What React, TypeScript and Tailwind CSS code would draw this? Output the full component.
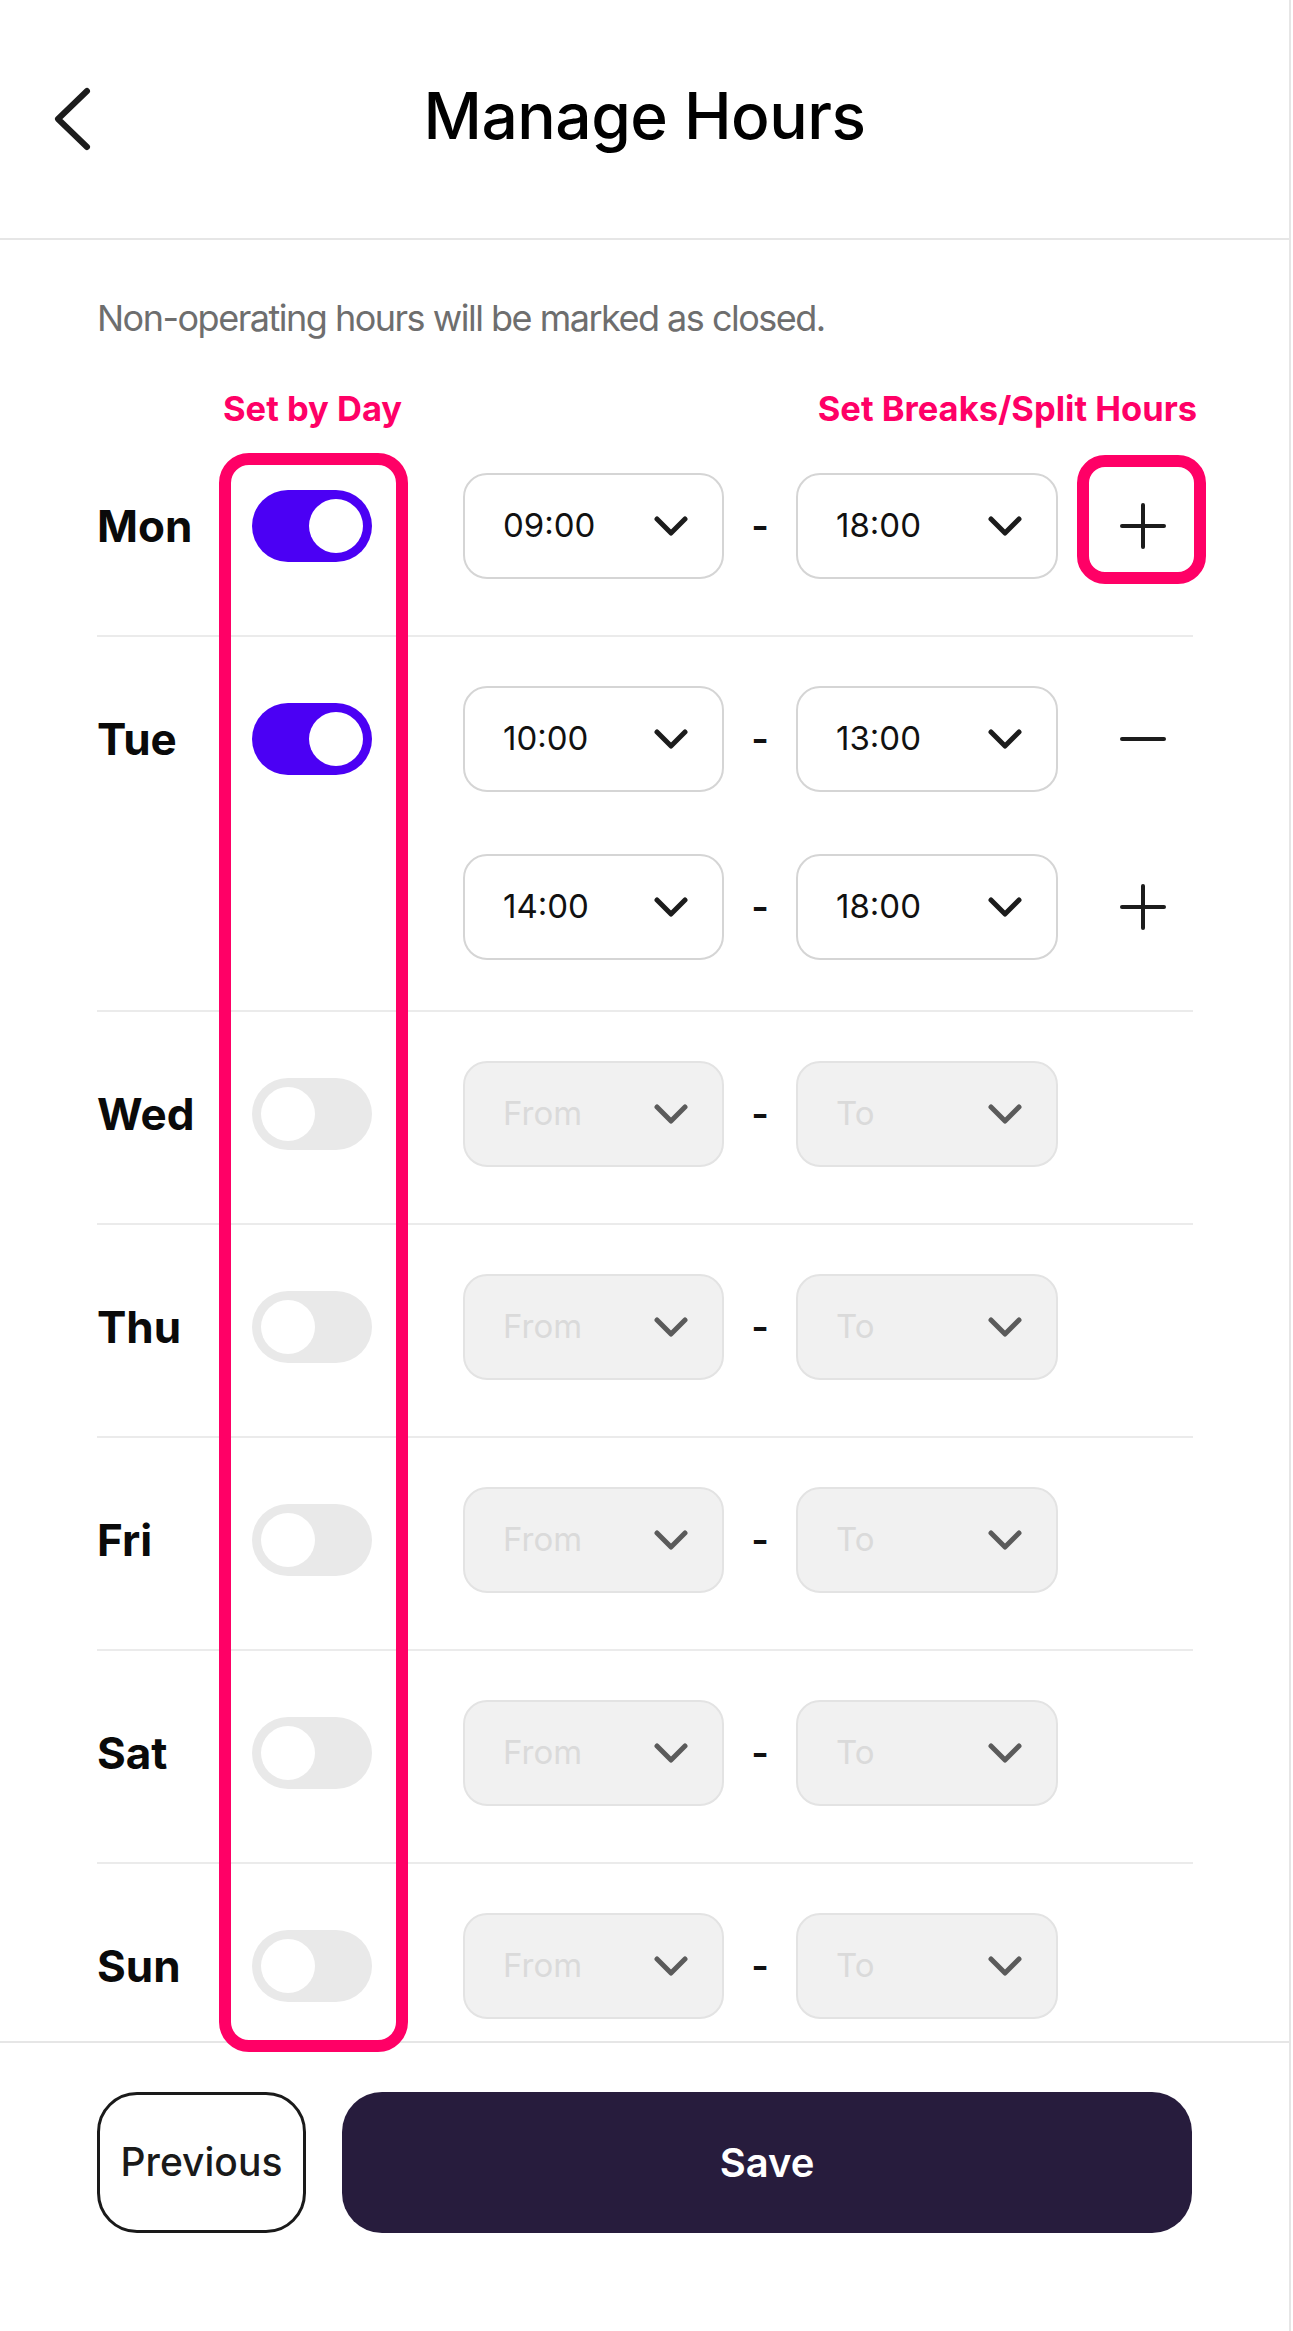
import React from 'react';

type Slot = { from: string; to: string; action: 'plus' | 'minus' };
type Day = { name: string; open: boolean; slots: Slot[] };

const days: Day[] = [
  { name: 'Mon', open: true, slots: [{ from: '09:00', to: '18:00', action: 'plus' }] },
  {
    name: 'Tue',
    open: true,
    slots: [
      { from: '10:00', to: '13:00', action: 'minus' },
      { from: '14:00', to: '18:00', action: 'plus' },
    ],
  },
  { name: 'Wed', open: false, slots: [] },
  { name: 'Thu', open: false, slots: [] },
  { name: 'Fri', open: false, slots: [] },
  { name: 'Sat', open: false, slots: [] },
  { name: 'Sun', open: false, slots: [] },
];

function Chevron({ muted }: { muted?: boolean }) {
  return (
    <svg width="34" height="20" viewBox="0 0 34 20" fill="none">
      <polyline
        points="3,3 17,17 31,3"
        stroke={muted ? '#5b5b5b' : '#1c1c1c'}
        strokeWidth="5"
        strokeLinecap="round"
        strokeLinejoin="round"
      />
    </svg>
  );
}

function Toggle({ on }: { on: boolean }) {
  return (
    <div
      className={`w-[120px] h-[72px] rounded-full p-[9px] flex ${
        on ? 'bg-[#4b00f4] justify-end' : 'bg-[#e9e9e9] justify-start'
      }`}
    >
      <div className="w-[54px] h-[54px] rounded-full bg-white" />
    </div>
  );
}

function TimeBox({ value, placeholder, wide }: { value?: string; placeholder: string; wide?: boolean }) {
  const enabled = !!value;
  return (
    <div
      className={`${wide ? 'w-[262px]' : 'w-[261px]'} h-[106px] rounded-[24px] border-2 flex items-center justify-between pl-[38px] pr-[34px] ${
        enabled ? 'border-[#d5d5d5] bg-white' : 'border-[#e3e3e3] bg-[#f1f1f1]'
      }`}
    >
      <span className={`text-[33px] ${enabled ? 'text-[#111111]' : 'text-[#dadada]'}`}>
        {value ?? placeholder}
      </span>
      <Chevron muted={!enabled} />
    </div>
  );
}

function ActionIcon({ kind }: { kind: 'plus' | 'minus' }) {
  return (
    <svg width="46" height="46" viewBox="0 0 46 46" fill="none">
      <line x1="2" y1="23" x2="44" y2="23" stroke="#1c1c1c" strokeWidth="4" strokeLinecap="round" />
      {kind === 'plus' && (
        <line x1="23" y1="2" x2="23" y2="44" stroke="#1c1c1c" strokeWidth="4" strokeLinecap="round" />
      )}
    </svg>
  );
}

function SlotRow({ from, to, action }: { from?: string; to?: string; action?: 'plus' | 'minus' }) {
  return (
    <div className="flex items-center h-[106px]">
      <TimeBox value={from} placeholder="From" />
      <div className="w-[72px] text-center text-[38px] font-semibold text-[#111111] leading-none">-</div>
      <TimeBox value={to} placeholder="To" wide />
      {action && (
        <div className="ml-[62px] flex items-center">
          <ActionIcon kind={action} />
        </div>
      )}
    </div>
  );
}

export default function App() {
  return (
    <div className="relative w-[1291px] h-[2331px] bg-white border-r-2 border-[#e6e6e6] font-['Inter',sans-serif] text-black overflow-hidden">
      {/* Header */}
      <header className="h-[240px] border-b-2 border-[#e6e6e6] flex items-center relative">
        <div className="absolute left-[52px] top-[86px]">
          <svg width="40" height="66" viewBox="0 0 40 66" fill="none">
            <polyline
              points="35,5 6,33 35,61"
              stroke="#1c1c1c"
              strokeWidth="6"
              strokeLinecap="round"
              strokeLinejoin="round"
            />
          </svg>
        </div>
        <h1 className="w-full text-center text-[64px] font-medium tracking-[-0.5px] -mt-[6px]">Manage Hours</h1>
      </header>

      {/* Scroll area */}
      <main className="h-[1801px] overflow-hidden">
        <p className="pt-[57px] pl-[97px] text-[36px] leading-[42px] tracking-[-1.5px] text-[#6e6e6e]">
          Non-operating hours will be marked as closed.
        </p>

        <div className="mt-[50px] h-[40px] flex items-center text-[34.5px] font-bold text-[#ff0066] leading-[40px]">
          <span className="ml-[223px]">Set by Day</span>
          <span className="ml-auto mr-[92px]">Set Breaks/Split Hours</span>
        </div>

        <div className="ml-[97px] w-[1096px] mt-[44px]">
          {days.map((d, i) => (
            <div
              key={d.name}
              className={`flex border-b-2 border-[#ebebeb] ${i === 0 ? 'pt-0' : 'pt-[49px]'} ${
                d.name === 'Tue' ? 'pb-[50px]' : 'pb-[56px]'
              }`}
            >
              <div className="w-[155px] h-[106px] flex items-center text-[44px] font-bold text-[#0a0a0a]">
                {d.name}
              </div>
              <div className="w-[120px] h-[106px] flex items-center">
                <Toggle on={d.open} />
              </div>
              <div className="ml-[91px] flex flex-col gap-[62px]">
                {d.open ? (
                  d.slots.map((s, j) => <SlotRow key={j} from={s.from} to={s.to} action={s.action} />)
                ) : (
                  <SlotRow />
                )}
              </div>
            </div>
          ))}
        </div>
      </main>

      {/* Footer */}
      <footer className="border-t-2 border-[#e6e6e6] pt-[49px] px-[97px] flex gap-[36px]">
        <button className="w-[209px] h-[141px] rounded-[40px] border-[3px] border-[#1a1a1a] text-[39px] font-medium text-[#1a1a1a]">
          Previous
        </button>
        <button className="flex-1 h-[141px] rounded-[40px] bg-[#271c3d] text-[40px] font-semibold text-white">
          Save
        </button>
      </footer>

      {/* Annotation overlays */}
      <div className="absolute left-[219px] top-[453px] w-[189px] h-[1599px] border-[12px] border-[#ff0066] rounded-[30px] pointer-events-none" />
      <div className="absolute left-[1077px] top-[455px] w-[129px] h-[129px] border-[12px] border-[#ff0066] rounded-[28px] pointer-events-none" />
    </div>
  );
}
